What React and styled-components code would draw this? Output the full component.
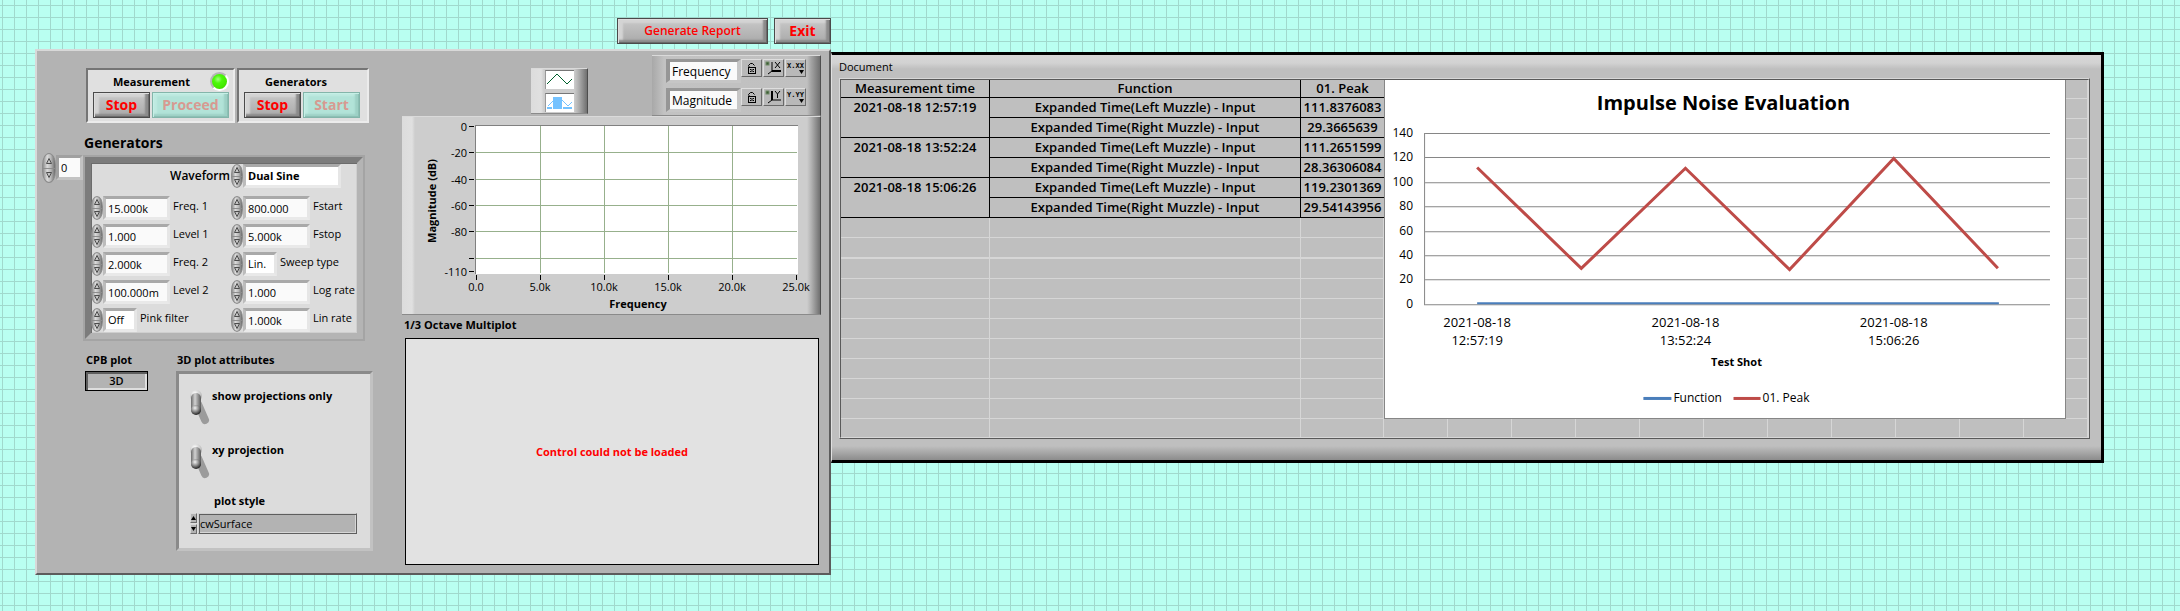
import React from "react";
import styled, { createGlobalStyle, css } from "styled-components";

const GlobalStyle = createGlobalStyle`
  *, *::before, *::after { box-sizing: border-box; }
  body {
    margin: 0;
    min-height: 100vh;
    background-color: #b9fff1;
    background-image:
      linear-gradient(to right, #a0d9cd 1px, transparent 1px),
      linear-gradient(to bottom, #a0d9cd 1px, transparent 1px);
    background-size: 12px 12px;
    background-position: 2px 5px;
    font-family: "Open Sans", "Noto Sans", sans-serif;
    font-size: 11px;
    line-height: 18px;
    color: #000;
  }
  button, input, select { font: inherit; color: inherit; margin: 0; padding: 0; border-radius: 0; }
`;

const Page = styled.main`
  display: grid;
  grid-template-columns: minmax(760px, 796fr) minmax(900px, 1273fr);
  padding: 18px 76px 34px 35px;
`;

const TopBar = styled.header`
  grid-area: 1 / 1;
  display: flex;
  justify-content: flex-end;
  gap: 6px;
  padding-bottom: 5px;
`;

const bevel = css`
  border: 1px solid #4a4a4a;
  background: linear-gradient(to bottom, #c9c9c9, #a9a9a9);
  box-shadow:
    inset 1px 1px 0 #dedede, inset -1px -1px 0 #6a6a6a,
    inset -4px -3px 2px #8a8a8a, inset 5px 4px 2px #d4d4d4;
`;

const PushButton = styled.button`
  ${bevel}
  width: ${(p) => p.$width}px;
  height: 26px;
  color: #ff0000;
  font-weight: ${(p) => (p.$small ? 600 : 700)};
  font-size: ${(p) => (p.$small ? 12 : 14)}px;
  line-height: 20px;
  &:disabled {
    border-color: #84b5aa;
    background: #b2e3d8;
    color: #d79a91;
    box-shadow:
      inset 1px 1px 0 #c6efe6, inset -1px -1px 0 #8cc0b5,
      inset -4px -3px 2px #9dd0c5, inset 4px 3px 2px #bfeae1;
  }
`;

const ControlPanel = styled.section`
  grid-area: 2 / 1;
  display: grid;
  grid-template-columns: 365px 1fr;
  padding: 0 8px 8px 0;
  background: #b3b3b3;
  border: 2px solid;
  border-color: #d8d8d8 #5c5c5c #5c5c5c #d8d8d8;
`;

const LeftColumn = styled.div`
  display: flex;
  flex-direction: column;
  padding: 17px 0 0 5px;
`;

const GroupRow = styled.div`
  display: flex;
  gap: 2px;
  padding-left: 44px;
`;

const GroupBox = styled.div`
  width: ${(p) => p.$width}px;
  height: 55px;
  padding: 1px 4px 0 5px;
  background: #e0e0e0;
  border: 2px solid;
  border-color: #757575 #ececec #ececec #757575;
`;

const GroupHead = styled.div`
  display: flex;
  align-items: center;
  justify-content: flex-end;
  gap: 20px;
  height: 21px;
  padding-right: ${(p) => p.$right || 0}px;
`;

const Buttons = styled.div`
  display: flex;
  gap: 2px;
`;

const Bold = styled.span`
  font-weight: 700;
`;

const Led = styled.span`
  width: 19px;
  height: 19px;
  border-radius: 50%;
  border: 2px solid;
  border-color: #b5b5b5 #fff #fff #b5b5b5;
  background: radial-gradient(circle at 40% 35%, #a4ff80 0, #4cf90a 30%, #44e800 65%, #2fae00 100%);
`;

const Heading = styled.h2`
  margin: 10px 0 0 42px;
  font-size: 14px;
  line-height: 20px;
  font-weight: 700;
`;

const ClusterRow = styled.div`
  display: flex;
  align-items: flex-start;
`;

const SpinButtons = styled.span`
  display: flex;
  flex-direction: column;
  flex: none;
  width: ${(p) => (p.$large ? 14 : 12)}px;
  height: ${(p) => (p.$large ? 30 : 24)}px;
  border-radius: 7px / 12px;
  overflow: hidden;
  background: linear-gradient(to right, #8e8e8e, #dadada 35%, #b8b8b8 65%, #6e6e6e);
  border: 1px solid #8c8c8c;
`;

const SpinButton = styled.button`
  flex: 1;
  min-height: 0;
  border: 0;
  background: transparent;
  display: grid;
  place-items: center;
  & + & { border-top: 1px solid #8c8c8c; }
`;

const fieldFrame = css`
  border: 3px solid;
  border-color: #a9a9a9 #e6e6e6 #e9e9e9 #bcbcbc;
  background: #fafafa;
  outline: none;
  appearance: none;
`;

const Field = styled.input`
  ${fieldFrame}
  width: ${(p) => p.$width}px;
  height: 24px;
  padding-left: 2px;
`;

const SelectField = styled.select`
  ${fieldFrame}
  width: ${(p) => p.$width}px;
  height: 24px;
  padding-left: 2px;
  background: #fff;
  font-weight: ${(p) => (p.$bold ? 700 : 400)};
`;

const IndexField = styled(Field)`
  margin-top: 2px;
  height: 25px;
  border-color: #a0a0a0 #c3c3c3 #c3c3c3 #a0a0a0;
`;

const Cluster = styled.div`
  width: 282px;
  height: 186px;
  margin-top: 2px;
  padding-top: 1px;
  background: #dcdcdc;
  border: 8px solid;
  border-color: #7c7c7c #b4b4b4 #b4b4b4 #7c7c7c;
  box-shadow: inset 1px 1px 0 #6c6c6c, inset -1px -1px 0 #cfcfcf;
  outline: 2px solid #a4a4a4;
  outline-offset: -2px;
`;

const ParamGrid = styled.div`
  display: grid;
  grid-template-columns: 140px 1fr;
  row-gap: 4px;
  padding-top: ${(p) => (p.$first ? 0 : 8)}px;
`;

const Param = styled.div`
  display: flex;
  align-items: flex-start;
`;

const ParamLabel = styled.label`
  padding-left: 3px;
  line-height: 20px;
  white-space: nowrap;
`;

const WaveLabel = styled.label`
  padding-right: 1px;
  text-align: right;
  font-weight: 600;
  font-size: 12px;
  line-height: 24px;
`;

const LowerRow = styled.div`
  display: grid;
  grid-template-columns: 91px 197px;
  margin: 10px 0 0 43px;
`;

const BlockLabel = styled.div`
  padding-left: 1px;
  height: 20px;
  font-weight: 700;
`;

const ModeButton = styled.button`
  width: 63px;
  height: 20px;
  border: 1px solid #000;
  background: #b3b3b3;
  box-shadow: inset 2px 2px 0 #5e5e5e, inset -2px -2px 0 #dedede;
  font-weight: 600;
  line-height: 16px;
`;

const AttributesBox = styled.div`
  height: 180px;
  padding: 16px 0 0 11px;
  background: #dcdcdc;
  border: 3px solid;
  border-color: #8a8a8a #c2c2c2 #c2c2c2 #8a8a8a;
`;

const ToggleRow = styled.label`
  display: flex;
  align-items: flex-start;
  gap: 1px;
  height: 54px;
  font-weight: 700;
  line-height: 12px;
`;

const ToggleGlyph = styled.svg`
  width: 20px;
  height: 35px;
  flex: none;
`;

const HiddenCheck = styled.input`
  appearance: none;
  width: 0;
  height: 0;
`;

const StyleLabel = styled.label`
  display: block;
  padding-left: 24px;
  margin-top: -6px;
  height: 21px;
  font-weight: 700;
`;

const StyleRow = styled.div`
  display: flex;
  gap: 1px;
`;

const ArrowPair = styled.div`
  display: flex;
  flex-direction: column;
  gap: 1px;
  width: 7px;
  height: 21px;
`;

const ArrowButton = styled.button`
  flex: 1;
  min-height: 0;
  border: 1px solid;
  border-color: #d8d8d8 #6c6c6c #6c6c6c #d8d8d8;
  background: #b3b3b3;
  display: grid;
  place-items: center;
`;

const StyleSelect = styled.select`
  appearance: none;
  width: 159px;
  height: 21px;
  padding-left: 1px;
  background: #b3b3b3;
  border: 1px solid;
  border-color: #d0d0d0 #5e5e5e #5e5e5e #d0d0d0;
  box-shadow: inset 1px 1px 0 #5e5e5e, inset -1px -1px 0 #d6d6d6;
`;

const RightColumn = styled.div`
  display: flex;
  flex-direction: column;
`;

const LegendRow = styled.div`
  display: flex;
  justify-content: flex-end;
  align-items: flex-end;
  gap: 64px;
  padding-top: 4px;
`;

const metal = css`
  border-top: 1px solid #dadada;
  border-right: 1px solid #4e4e4e;
  border-bottom: 1px solid #8a8a8a;
  background: linear-gradient(
    to right,
    #dcdcdc 0, #e0e0e0 10px, #cdcdcd 13px,
    #cdcdcd calc(100% - 13px), #b4b4b4 calc(100% - 9px), #707070 100%
  );
`;

const PlotLegend = styled.div`
  ${metal}
  width: 57px;
  height: 46px;
  margin-bottom: 2px;
  padding: 1px 0 0 14px;
  display: flex;
  flex-direction: column;
  gap: 4px;
`;

const Swatch = styled.svg`
  width: 29px;
  height: 19px;
  background: #fff;
  border-top: 1px solid #777;
  border-left: 1px solid #999;
`;

const ScaleLegend = styled.div`
  ${metal}
  width: 169px;
  height: 61px;
  padding: 3px 0 0 14px;
  display: flex;
  flex-direction: column;
  gap: 5px;
  background: linear-gradient(
    to right,
    #a8a8a8 0, #c2c2c2 12px,
    #c0c0c0 calc(100% - 13px), #a4a4a4 calc(100% - 9px), #707070 100%
  );
`;

const ScaleRow = styled.div`
  display: flex;
  align-items: flex-start;
  height: 24px;
`;

const ScaleName = styled(Field)`
  font-size: 12px;
  border-width: 3px 4px;
  border-color: #969696 #c6c6c6 #c6c6c6 #969696;
`;

const ToolButton = styled.button`
  width: 21px;
  height: 18px;
  margin-right: 1px;
  border: 1px solid;
  border-color: #dedede #6a6a6a #6a6a6a #dedede;
  background: #b9b9b9;
  display: grid;
  place-items: center;
`;

const FormatMark = styled.span`
  display: flex;
  flex-direction: column;
  align-items: flex-end;
  font-family: "DejaVu Sans Mono", monospace;
  font-size: 7px;
  font-weight: 700;
  line-height: 8px;
`;

const GraphPanel = styled.div`
  ${metal}
  svg { display: block; width: 100%; height: auto; }
`;

const OctaveTitle = styled.div`
  padding: 0 2px;
  height: 23px;
  line-height: 20px;
  font-weight: 700;
`;

const OctaveBox = styled.div`
  flex: 1;
  min-height: 227px;
  margin: 0 2px 0 3px;
  display: grid;
  place-items: center;
  background: #e2e2e2;
  border: 1px solid #000;
  color: #ff0000;
  font-weight: 700;
`;

const DocumentPanel = styled.section`
  grid-area: 2 / 2;
  align-self: start;
  margin-top: 3px;
  padding: 0 11px 21px 7px;
  border: 3px solid #000;
  border-left: 1px solid #e0e0e0;
  background: linear-gradient(
    to bottom,
    #d6d6d6 0, #d2d2d2 8px, #bfbfbf 14px,
    #bfbfbf calc(100% - 14px), #8c8c8c 100%
  );
`;

const DocumentTitle = styled.div`
  padding-top: 3px;
  height: 23px;
`;

const SheetFrame = styled.div`
  border: 1px solid;
  border-color: #d8d8d8 #5a5a5a #5a5a5a #d8d8d8;
`;

const Sheet = styled.div`
  display: flex;
  border: 1px solid;
  border-color: #5a5a5a #d8d8d8 #d8d8d8 #5a5a5a;
  background: #bfbfbf;
`;

const Table = styled.table`
  flex: none;
  width: 543px;
  table-layout: fixed;
  border-collapse: separate;
  border-spacing: 0;
  font-weight: 600;
  font-size: 13px;
  line-height: 19px;
`;

const Cell = styled.td`
  height: ${(p) => p.$height || 20}px;
  padding: 0;
  text-align: center;
  vertical-align: top;
  white-space: nowrap;
  border: 0 solid ${(p) => (p.$blank ? "#d6d6d6" : "#000")};
  border-right-width: ${(p) => (p.$last && !p.$blank ? 0 : 1)}px;
  border-bottom-width: ${(p) => (p.$open ? 0 : p.$height === 21 ? 2 : 1)}px;
`;

const HeadCell = styled(Cell)`
  font-weight: 600;
  line-height: 17px;
`;

const GridArea = styled.div`
  flex: 1;
  padding-right: 22px;
  background:
    repeating-linear-gradient(to right, transparent 0 63px, #d6d6d6 63px 64px),
    repeating-linear-gradient(to top, transparent 0 18px, #d6d6d6 18px 19px, transparent 19px 20px);
`;

const ChartCard = styled.div`
  background: #fff;
  border: 1px solid #868686;
  border-top: 0;
  svg { display: block; width: 100%; height: auto; }
`;

const Triangle = ({ down }) => (
  <svg width="6" height="6" viewBox="0 0 6 6" aria-hidden="true">
    <path d={down ? "M0.5 0.5H5.5L3 5.5Z" : "M0.5 5.5H5.5L3 0.5Z"} fill="#c4c4c4" stroke="#4c4c4c" strokeWidth="1" />
  </svg>
);

const Arrow = ({ down }) => (
  <svg width="5" height="4" viewBox="0 0 5 4" aria-hidden="true">
    <path d={down ? "M0 0H5L2.5 4Z" : "M0 4H5L2.5 0Z"} fill="#000" />
  </svg>
);

const Spinner = ({ large, name }) => (
  <SpinButtons $large={large}>
    <SpinButton aria-label={`Increase ${name}`}><Triangle /></SpinButton>
    <SpinButton aria-label={`Decrease ${name}`}><Triangle down /></SpinButton>
  </SpinButtons>
);

const params = [
  { id: "freq1", label: "Freq. 1", value: "15.000k" },
  { id: "fstart", label: "Fstart", value: "800.000" },
  { id: "level1", label: "Level 1", value: "1.000" },
  { id: "fstop", label: "Fstop", value: "5.000k" },
  { id: "freq2", label: "Freq. 2", value: "2.000k" },
  { id: "sweep", label: "Sweep type", value: "Lin.", options: ["Lin.", "Log."] },
  { id: "level2", label: "Level 2", value: "100.000m" },
  { id: "lograte", label: "Log rate", value: "1.000" },
  { id: "pink", label: "Pink filter", value: "Off", options: ["Off", "On"] },
  { id: "linrate", label: "Lin rate", value: "1.000k" },
];

const ParamControl = ({ id, label, value, options }) => (
  <Param>
    <Spinner name={label} />
    {options ? (
      <SelectField id={id} $width={34} defaultValue={value}>
        {options.map((o) => <option key={o}>{o}</option>)}
      </SelectField>
    ) : (
      <Field id={id} $width={67} defaultValue={value} />
    )}
    <ParamLabel htmlFor={id}>{label}</ParamLabel>
  </Param>
);

const Toggle = ({ label }) => (
  <ToggleRow>
    <ToggleGlyph viewBox="0 0 20 35" aria-hidden="true">
      <defs>
        <linearGradient id="lever" x1="0" x2="1" y1="0" y2="0">
          <stop offset="0" stopColor="#6b6b6b" />
          <stop offset="0.4" stopColor="#d2d2d2" />
          <stop offset="1" stopColor="#5a5a5a" />
        </linearGradient>
        <radialGradient id="tip" cx="0.4" cy="0.3" r="0.7">
          <stop offset="0" stopColor="#f2f2f2" />
          <stop offset="0.5" stopColor="#909090" />
          <stop offset="1" stopColor="#222" />
        </radialGradient>
        <radialGradient id="base" cx="0.4" cy="0.3" r="0.7">
          <stop offset="0" stopColor="#fff" />
          <stop offset="1" stopColor="#adadad" />
        </radialGradient>
      </defs>
      <path d="M8 14L15 30" stroke="#9b9b9b" strokeWidth="8" strokeLinecap="round" />
      <circle cx="6" cy="6" r="6" fill="url(#base)" />
      <rect x="1" y="3" width="10" height="21" rx="5" fill="url(#lever)" />
      <circle cx="6" cy="20" r="5" fill="url(#tip)" />
    </ToggleGlyph>
    <HiddenCheck type="checkbox" />
    <span>{label}</span>
  </ToggleRow>
);

const LockIcon = () => (
  <svg width="10" height="13" viewBox="0 0 10 13" fill="none" stroke="#000" aria-hidden="true">
    <path d="M2.5 5.5L1.5 3.5L3.5 1.5H5.5L7.5 3.5" />
    <rect x="1.5" y="5.5" width="7" height="6" />
    <path d="M3 7.5H4M6 7.5H7M3 9.5H4M6 9.5H7M5 7V10" />
  </svg>
);

const AxisIcon = ({ letter }) => (
  <svg width="18" height="14" viewBox="0 0 18 14" fill="none" stroke="#000" aria-hidden="true">
    <rect x="1" y="1" width="3" height="3" fill="#3d5c34" stroke="#6f8a66" />
    <path d="M7 1V10" strokeWidth={letter === "Y" ? 2 : 1} />
    <path d="M7 10H16" strokeWidth={letter === "X" ? 2 : 1} />
    <path d="M7 10L3 13" />
    {letter === "X" ? <path d="M10 1L15 7M15 1L10 7" /> : <path d="M10 1L12.5 4L15 1M12.5 4V8" />}
  </svg>
);

const ScaleControls = ({ axis, name }) => (
  <ScaleRow>
    <ScaleName $width={75} defaultValue={name} aria-label={`${axis} scale name`} />
    <ToolButton aria-label={`Lock ${axis} autoscale`}><LockIcon /></ToolButton>
    <ToolButton aria-label={`Autoscale ${axis}`}><AxisIcon letter={axis} /></ToolButton>
    <ToolButton aria-label={`${axis} scale format`}>
      <FormatMark>{`${axis}.${axis}${axis}`}<Arrow down /></FormatMark>
    </ToolButton>
  </ScaleRow>
);

const freqTicks = ["0.0", "5.0k", "10.0k", "15.0k", "20.0k", "25.0k"];
const magTicks = [[10, "0"], [36, "-20"], [63, "-40"], [89, "-60"], [115, "-80"], [142, ""], [155, "-110"]];

const SpectrumGraph = () => (
  <svg viewBox="0 0 418 197" shapeRendering="crispEdges" fontSize="11" role="img" aria-label="Magnitude over frequency">
    <rect x="73" y="8" width="323" height="149" fill="#fff" />
    <path d="M73.5 157V8.5H396" fill="none" stroke="#808080" />
    {magTicks.map(([y, t]) => (
      <g key={y}>
        {y > 10 && y < 155 && <path d={`M74 ${y - 0.5}H395`} stroke="#97b08c" />}
        <path d={`M67 ${y - 0.5}H72`} stroke="#000" />
        <text x="65" y={y + 4} textAnchor="end">{t}</text>
      </g>
    ))}
    {freqTicks.map((t, i) => (
      <g key={t}>
        {i > 0 && i < 5 && <path d={`M${74.5 + i * 64} 9V156`} stroke="#97b08c" />}
        <path d={`M${74.5 + i * 64} 158V163`} stroke="#000" />
        <text x={74 + i * 64} y="174" textAnchor="middle">{t}</text>
      </g>
    ))}
    <text x="236" y="191" textAnchor="middle" fontWeight="700">Frequency</text>
    <text transform="translate(34 84) rotate(-90)" textAnchor="middle" fontWeight="700">Magnitude (dB)</text>
  </svg>
);

const peaks = [
  ["2021-08-18", "12:57:19", "111.8376083", "29.3665639"],
  ["2021-08-18", "13:52:24", "111.2651599", "28.36306084"],
  ["2021-08-18", "15:06:26", "119.2301369", "29.54143956"],
];
const series = peaks.flatMap((p) => [p[2], p[3]]).map((v, i) => `${92 + i * 104},${224 - (v * 171) / 140}`);

const ImpulseChart = () => (
  <svg viewBox="0 0 679 338" fontSize="12" role="img" aria-label="Impulse Noise Evaluation">
    <text x="338" y="30" textAnchor="middle" fontSize="20" fontWeight="700">Impulse Noise Evaluation</text>
    {[140, 120, 100, 80, 60, 40, 20, 0].map((v, i) => (
      <g key={v}>
        <path d={`M40 ${Math.round(53 + i * 24.4) + 0.5}H664`} stroke="#868686" />
        <text x="28" y={Math.round(53 + i * 24.4) + 4} textAnchor="end">{v}</text>
      </g>
    ))}
    <path d="M39.5 53V225" stroke="#868686" />
    <path d="M92 223H613" stroke="#4a7ebb" strokeWidth="2" />
    <polyline points={series.join(" ")} fill="none" stroke="#be4b48" strokeWidth="3" />
    {peaks.map(([day, time], i) => (
      <g key={time} fontSize="13" textAnchor="middle">
        <text x={92 + i * 208} y="247">{day}</text>
        <text x={92 + i * 208} y="265">{time}</text>
      </g>
    ))}
    <text x="351" y="286" textAnchor="middle" fontSize="11" fontWeight="700">Test Shot</text>
    <path d="M258 318H286" stroke="#4a7ebb" strokeWidth="3" />
    <text x="288" y="322">Function</text>
    <path d="M348 318H375" stroke="#be4b48" strokeWidth="3" />
    <text x="377" y="322">01. Peak</text>
  </svg>
);

const blankRows = [20, 21, 20, 20, 20, 20, 20, 20, 20, 20, 18];

export default function App() {
  return (
    <>
      <GlobalStyle />
      <Page>
        <TopBar>
          <PushButton $width={151} $small>Generate Report</PushButton>
          <PushButton $width={57}>Exit</PushButton>
        </TopBar>

        <ControlPanel>
          <LeftColumn>
            <GroupRow>
              <GroupBox $width={149}>
                <GroupHead><Bold>Measurement</Bold><Led role="img" aria-label="Running" /></GroupHead>
                <Buttons>
                  <PushButton $width={57}>Stop</PushButton>
                  <PushButton $width={77} disabled>Proceed</PushButton>
                </Buttons>
              </GroupBox>
              <GroupBox $width={132}>
                <GroupHead $right={36}><Bold>Generators</Bold></GroupHead>
                <Buttons>
                  <PushButton $width={57}>Stop</PushButton>
                  <PushButton $width={57} disabled>Start</PushButton>
                </Buttons>
              </GroupBox>
            </GroupRow>

            <Heading>Generators</Heading>
            <ClusterRow>
              <Spinner large name="index" />
              <IndexField $width={27} defaultValue="0" aria-label="Generator index" />
              <Cluster>
                <ParamGrid $first>
                  <WaveLabel htmlFor="waveform">Waveform</WaveLabel>
                  <Param>
                    <Spinner name="Waveform" />
                    <SelectField id="waveform" $width={98} $bold defaultValue="Dual Sine">
                      <option>Dual Sine</option>
                      <option>Sine</option>
                    </SelectField>
                  </Param>
                </ParamGrid>
                <ParamGrid>
                  {params.map((p) => <ParamControl key={p.id} {...p} />)}
                </ParamGrid>
              </Cluster>
            </ClusterRow>

            <LowerRow>
              <div>
                <BlockLabel>CPB plot</BlockLabel>
                <ModeButton>3D</ModeButton>
              </div>
              <div>
                <BlockLabel>3D plot attributes</BlockLabel>
                <AttributesBox>
                  <Toggle label="show projections only" />
                  <Toggle label="xy projection" />
                  <StyleLabel htmlFor="plotstyle">plot style</StyleLabel>
                  <StyleRow>
                    <ArrowPair>
                      <ArrowButton aria-label="Previous style"><Arrow /></ArrowButton>
                      <ArrowButton aria-label="Next style"><Arrow down /></ArrowButton>
                    </ArrowPair>
                    <StyleSelect id="plotstyle" defaultValue="cwSurface">
                      <option>cwSurface</option>
                      <option>cwLine</option>
                    </StyleSelect>
                  </StyleRow>
                </AttributesBox>
              </div>
            </LowerRow>
          </LeftColumn>

          <RightColumn>
            <LegendRow>
              <PlotLegend>
                <Swatch viewBox="0 0 28 18" role="img" aria-label="Line plot">
                  <path d="M1 13L11 3L21 13L26 8" fill="none" stroke="#00602c" strokeWidth="1" />
                </Swatch>
                <Swatch viewBox="0 0 28 18" role="img" aria-label="Bar plot">
                  <path d="M2 12L8 6M16 6L22 12L26 8" fill="none" stroke="#74c2ff" />
                  <path d="M1 13H6V15H1ZM7 3H16V15H7ZM17 13H26V15H17Z" fill="#74c2ff" />
                </Swatch>
              </PlotLegend>
              <ScaleLegend>
                <ScaleControls axis="X" name="Frequency" />
                <ScaleControls axis="Y" name="Magnitude" />
              </ScaleLegend>
            </LegendRow>
            <GraphPanel><SpectrumGraph /></GraphPanel>
            <OctaveTitle>1/3 Octave Multiplot</OctaveTitle>
            <OctaveBox>Control could not be loaded</OctaveBox>
          </RightColumn>
        </ControlPanel>

        <DocumentPanel>
          <DocumentTitle>Document</DocumentTitle>
          <SheetFrame>
            <Sheet>
              <Table>
                <colgroup>
                  <col width="149" />
                  <col width="311" />
                  <col width="83" />
                </colgroup>
                <thead>
                  <tr>
                    <HeadCell as="th" $height={18}>Measurement time</HeadCell>
                    <HeadCell as="th" $height={18}>Function</HeadCell>
                    <HeadCell as="th" $height={18} $last>01. Peak</HeadCell>
                  </tr>
                </thead>
                <tbody>
                  {peaks.map(([day, time, left, right]) => (
                    <React.Fragment key={time}>
                      <tr>
                        <Cell rowSpan={2}>{day} {time}</Cell>
                        <Cell>Expanded Time(Left Muzzle) - Input</Cell>
                        <Cell $last>{left}</Cell>
                      </tr>
                      <tr>
                        <Cell>Expanded Time(Right Muzzle) - Input</Cell>
                        <Cell $last>{right}</Cell>
                      </tr>
                    </React.Fragment>
                  ))}
                  {blankRows.map((h, i) => (
                    <tr key={i}>
                      <Cell $blank $height={h} $open={h === 18} />
                      <Cell $blank $height={h} $open={h === 18} />
                      <Cell $blank $height={h} $open={h === 18} $last />
                    </tr>
                  ))}
                </tbody>
              </Table>
              <GridArea>
                <ChartCard><ImpulseChart /></ChartCard>
              </GridArea>
            </Sheet>
          </SheetFrame>
        </DocumentPanel>
      </Page>
    </>
  );
}
